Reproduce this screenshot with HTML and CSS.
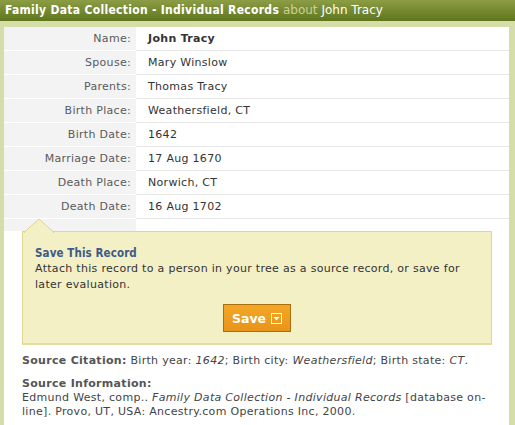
FILE: index.html
```html
<!DOCTYPE html>
<html>
<head>
<meta charset="utf-8">
<link rel="stylesheet" href="styles.css">
</head>
<body>
<div class="header"><span class="title">Family Data Collection - Individual Records</span> <span class="about">about</span> <span class="who">John Tracy</span></div>
<div class="frame">
  <div class="panel">
    <table class="rec">
      <tr><th>Name:</th><td><b>John Tracy</b></td></tr>
      <tr><th>Spouse:</th><td>Mary Winslow</td></tr>
      <tr><th>Parents:</th><td>Thomas Tracy</td></tr>
      <tr><th>Birth Place:</th><td>Weathersfield, CT</td></tr>
      <tr><th>Birth Date:</th><td>1642</td></tr>
      <tr><th>Marriage Date:</th><td>17 Aug 1670</td></tr>
      <tr><th>Death Place:</th><td>Norwich, CT</td></tr>
      <tr><th>Death Date:</th><td>16 Aug 1702</td></tr>
      <tr class="spacer"><th></th><td></td></tr>
    </table>
    <div class="callout">
      <svg class="pointer" width="32" height="15" viewBox="0 0 32 15"><polygon points="1,14.5 16,1 31,14.5" fill="#f3f0c6" stroke="#ddd48c" stroke-width="1"/><rect x="2" y="14" width="28" height="2" fill="#f3f0c6"/></svg>
      <div class="ctitle">Save This Record</div>
      <div class="ctext">Attach this record to a person in your tree as a source record, or save for later evaluation.</div>
      <div class="btnrow"><button class="save">Save <span class="dd"><svg width="11" height="11" viewBox="0 0 11 11"><rect x="0.5" y="0.5" width="10" height="10" fill="none" stroke="#fff"/><polygon points="2.5,4 8.5,4 5.5,7.5" fill="#fff"/></svg></span></button></div>
    </div>
    <div class="source">
      <p class="cit"><b>Source Citation:</b> Birth year: <i>1642</i>; Birth city: <i>Weathersfield</i>; Birth state: <i>CT</i>.</p>
      <p class="info"><b>Source Information:</b><br>Edmund West, comp.. <i>Family Data Collection - Individual Records</i> [database on-&#8203;line]. Provo, UT, USA: Ancestry.com Operations Inc, 2000.</p>
    </div>
  </div>
</div>
</body>
</html>
```
FILE: styles.css
```css
html, body { margin: 0; padding: 0; background: #fff; }
body { font-family: "DejaVu Sans", Verdana, sans-serif; font-size: 11px; letter-spacing: 0.3px; color: #333; width: 515px; height: 425px; overflow: hidden; }
.header { height: 21px; line-height: 21px; padding-left: 5px; background: linear-gradient(#8c9d45, #5f761c); color: #fff; font-size: 12px; letter-spacing: 0; white-space: nowrap; }
.header .title { font-weight: bold; font-size: 12px; letter-spacing: 0.3px; font-family: "DejaVu Sans Condensed", "DejaVu Sans", sans-serif; }
.header .about { color: #c9d199; }
.frame { background: #d5dda9; padding: 6px 6px 0 4px; height: 398px; }
.panel { background: #fff; height: 398px; }
.rec { border-collapse: collapse; width: 100%; }
.rec th { width: 127px; background: #f3f3f3; text-align: right; font-weight: normal; color: #5a5a5a; padding: 0 5px 0 0; height: 23px; border-bottom: 1px solid #fff; }
.rec td { padding: 0 0 0 12px; height: 23px; border-bottom: 1px solid #e8e8e8; color: #333; }
.rec tr.spacer th, .rec tr.spacer td { height: 12px; border-bottom: none; }
.callout { position: relative; margin: 0 17px 0 18px; background: #f3f0c6; border: 1px solid #e0d78f; border-bottom: 2px solid #e3dca3; padding: 13px 0 11px 12px; }
.pointer { position: absolute; left: 0; top: -14px; }
.ctitle { font-weight: bold; color: #3e5a88; font-size: 11.5px; letter-spacing: 0.1px; line-height: 16px; font-family: "DejaVu Sans Condensed", "DejaVu Sans", sans-serif; }
.ctext { line-height: 16px; color: #333; padding-right: 20px; }
.btnrow { text-align: center; padding-top: 11px; padding-right: 12px; }
.save { width: 68px; height: 28px; background: linear-gradient(#f4a726, #e8941a); border: 1px solid #a96d12; color: #fff; font-family: "DejaVu Sans", sans-serif; font-weight: bold; font-size: 12.5px; letter-spacing: 0; padding: 0; display: inline-flex; align-items: center; justify-content: center; gap: 5px; }
.dd { display: inline-flex; }
.source { padding: 9px 20px 0 18px; color: #444; }
.source p { margin: 0; line-height: 14px; }
.source b { color: #555; }
.cit { margin-bottom: 9px !important; }
```
